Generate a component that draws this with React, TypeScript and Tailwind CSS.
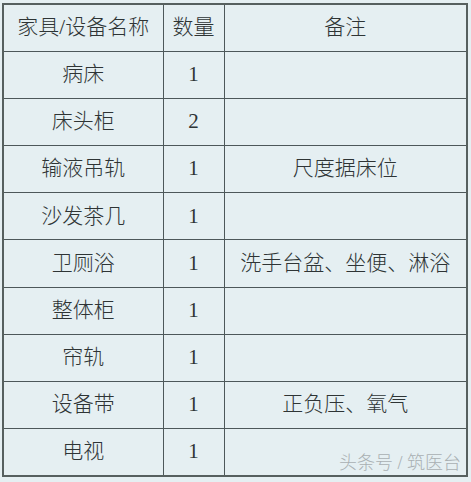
const rows: [string, string, string][] = [
  ['病床', '1', ''],
  ['床头柜', '2', ''],
  ['输液吊轨', '1', '尺度据床位'],
  ['沙发茶几', '1', ''],
  ['卫厕浴', '1', '洗手台盆、坐便、淋浴'],
  ['整体柜', '1', ''],
  ['帘轨', '1', ''],
  ['设备带', '1', '正负压、氧气'],
  ['电视', '1', ''],
]

const cell = 'border border-[#4d585a] text-center align-middle p-0 font-light'

export default function App() {
  return (
    <div
      className="relative h-[482px] w-[471px] bg-[#e5eff2] pl-[2px] pt-[3px] text-[21px] text-[#2e3435]"
      style={{ fontFamily: '"Liberation Serif", "Noto Sans CJK SC", serif' }}
    >
      <table className="w-[466px] table-fixed border-collapse border-2 border-[#56605f]">
        <colgroup>
          <col className="w-[160px]" />
          <col className="w-[61px]" />
          <col />
        </colgroup>
        <thead>
          <tr className="h-[47.2px]">
            <th className={cell}>家具/设备名称</th>
            <th className={cell}>数量</th>
            <th className={cell}>备注</th>
          </tr>
        </thead>
        <tbody>
          {rows.map(([name, qty, note]) => (
            <tr key={name} className="h-[47.2px]">
              <td className={cell}>{name}</td>
              <td className={cell}>{qty}</td>
              <td className={cell}>{note}</td>
            </tr>
          ))}
        </tbody>
      </table>
      {/* watermark */}
      <div className="absolute bottom-[5px] right-[10px] text-[18px] font-light text-[#a9b0b2]">
        头条号 / 筑医台
      </div>
    </div>
  )
}
